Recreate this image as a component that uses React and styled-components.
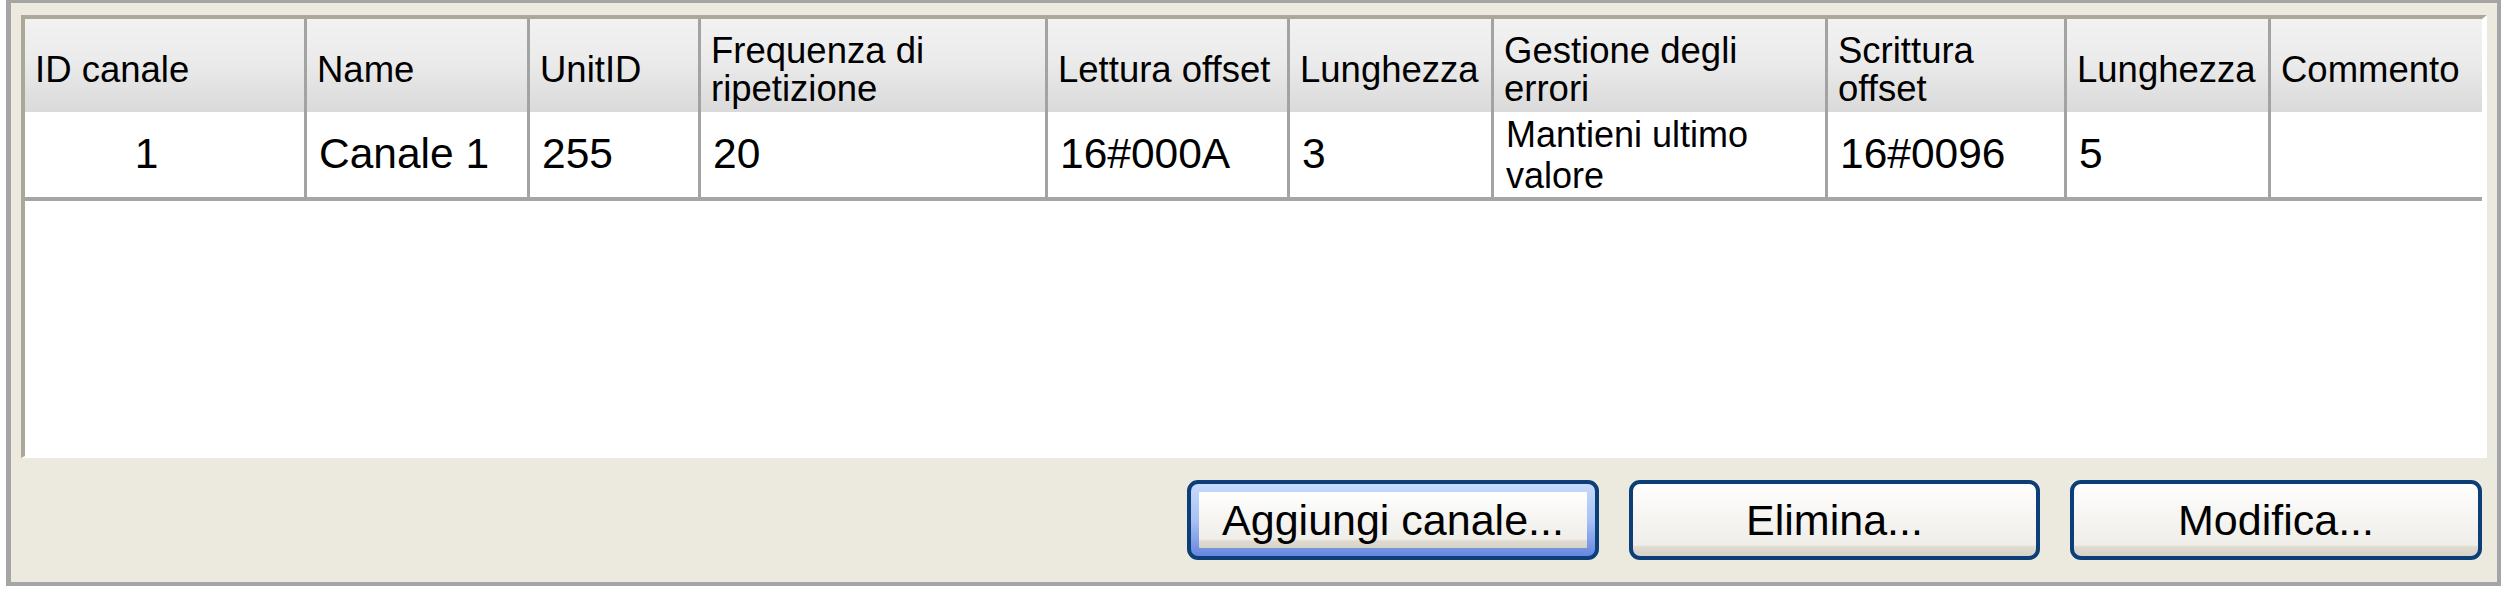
import React from 'react';
import styled, { createGlobalStyle } from 'styled-components';

const GlobalStyle = createGlobalStyle`
  html, body {
    margin: 0;
    padding: 0;
    background: #ffffff;
  }
  body {
    font-family: "Liberation Sans", Arial, sans-serif;
    color: #000000;
  }
`;

const COLUMNS = '282px 223px 171px 347px 242px 204px 334px 239px 204px 1fr';

const Frame = styled.div`
  box-sizing: border-box;
  width: 2495px;
  margin-left: 6px;
  display: flex;
  flex-direction: column;
  background: #ece9de;
  border: 4px solid #a5a5a5;
  border-top-width: 3px;
  border-left-width: 5px;
  box-shadow: 0 9px 0 #ece9de;
`;

const ListPanel = styled.div`
  box-sizing: border-box;
  height: 443px;
  margin: 12px 10px 0 10px;
  display: flex;
  flex-direction: column;
  background: #ffffff;
  border-style: solid;
  border-width: 4px 5px 2px 4px;
  border-color: #aca899 #ffffff #ffffff #aca899;
`;

const HeaderRow = styled.div`
  display: grid;
  grid-template-columns: ${COLUMNS};
  height: 93px;
  background: linear-gradient(to bottom, #f2f2f2 0%, #ebebeb 45%, #e0e0e0 80%, #dadada 100%);
`;

const HeaderCell = styled.div`
  box-sizing: border-box;
  display: flex;
  align-items: center;
  padding: 8px 0 0 10px;
  border-right: 3px solid #a3a3a3;
  font-size: 36.5px;
  line-height: 38px;
  white-space: pre;
  &:last-child {
    border-right: none;
  }
`;

const DataRow = styled.div`
  box-sizing: border-box;
  display: grid;
  grid-template-columns: ${COLUMNS};
  height: 89px;
  border-bottom: 4px solid #a5a5a5;
`;

const DataCell = styled.div`
  box-sizing: border-box;
  display: flex;
  align-items: center;
  justify-content: ${({ $center }) => ($center ? 'center' : 'flex-start')};
  padding: ${({ $center }) => ($center ? '0 36px 0 0' : '0 0 0 12px')};
  border-right: 3px solid #a3a3a3;
  font-size: ${({ $small }) => ($small ? '36px' : '42.5px')};
  line-height: ${({ $small }) => ($small ? '41px' : '1')};
  white-space: pre;
  &:last-child {
    border-right: none;
  }
`;

const ButtonBar = styled.div`
  display: flex;
  justify-content: flex-end;
  gap: 30px;
  padding: 22px 15px 22px 0;
`;

const Button = styled.button`
  box-sizing: border-box;
  width: ${({ $width }) => $width}px;
  height: 80px;
  display: flex;
  padding: ${({ $default }) => ($default ? '8px' : '0')};
  border: 4px solid #0c3f77;
  border-radius: 11px;
  background: linear-gradient(to bottom, #c6dbfc 0%, #a9c2f4 50%, #6786df 100%);
  font-family: inherit;
  overflow: hidden;
  cursor: pointer;
`;

const ButtonFace = styled.span`
  flex: 1;
  display: flex;
  align-items: center;
  justify-content: center;
  border-radius: ${({ $default }) => ($default ? '1px' : '7px')};
  background: linear-gradient(
    to bottom,
    #ffffff 0%,
    #f6f5f2 45%,
    #efeee9 84%,
    #dfdad0 88%,
    #d8d3c7 100%
  );
  font-size: 43px;
  color: #000000;
`;

const headers = [
  'ID canale',
  'Name',
  'UnitID',
  'Frequenza di\nripetizione',
  'Lettura offset',
  'Lunghezza',
  'Gestione degli\nerrori',
  'Scrittura\noffset',
  'Lunghezza',
  'Commento',
];

const channels = [
  {
    id: 1,
    name: 'Canale 1',
    unitId: 255,
    rate: 20,
    readOffset: '16#000A',
    readLength: 3,
    errorHandling: 'Mantieni ultimo\nvalore',
    writeOffset: '16#0096',
    writeLength: 5,
    comment: '',
  },
];

const buttons = [
  { label: 'Aggiungi canale...', width: 412, isDefault: true },
  { label: 'Elimina...', width: 411 },
  { label: 'Modifica...', width: 412 },
];

function App() {
  return (
    <>
      <GlobalStyle />
      <Frame>
        <ListPanel>
          <HeaderRow>
            {headers.map((h, i) => (
              <HeaderCell key={i}>{h}</HeaderCell>
            ))}
          </HeaderRow>
          {channels.map((c) => (
            <DataRow key={c.id}>
              <DataCell $center>{c.id}</DataCell>
              <DataCell>{c.name}</DataCell>
              <DataCell>{c.unitId}</DataCell>
              <DataCell>{c.rate}</DataCell>
              <DataCell>{c.readOffset}</DataCell>
              <DataCell>{c.readLength}</DataCell>
              <DataCell $small>{c.errorHandling}</DataCell>
              <DataCell>{c.writeOffset}</DataCell>
              <DataCell>{c.writeLength}</DataCell>
              <DataCell>{c.comment}</DataCell>
            </DataRow>
          ))}
        </ListPanel>
        <ButtonBar>
          {buttons.map((b) => (
            <Button key={b.label} $width={b.width} $default={b.isDefault}>
              <ButtonFace $default={b.isDefault}>{b.label}</ButtonFace>
            </Button>
          ))}
        </ButtonBar>
      </Frame>
    </>
  );
}

export default App;
